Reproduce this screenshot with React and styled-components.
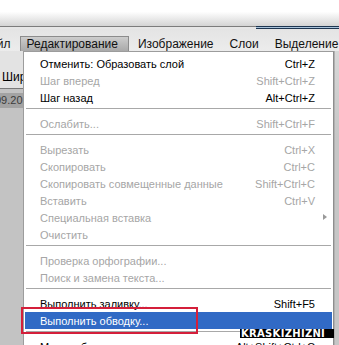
import styled, { createGlobalStyle } from 'styled-components';

const GlobalStyle = createGlobalStyle`
    html, body {
        margin: 0;
        padding: 0;
        overflow: hidden;
        background: #c4c4c4;
    }
    * {
        box-sizing: border-box;
    }
`;

const menuTitles = ['Файл', 'Редактирование', 'Изображение', 'Слои', 'Выделение'];

const items = [
    { label: 'Отменить: Образовать слой', keys: 'Ctrl+Z' },
    { label: 'Шаг вперед', keys: 'Shift+Ctrl+Z', off: true },
    { label: 'Шаг назад', keys: 'Alt+Ctrl+Z' },
    { sep: true },
    { label: 'Ослабить...', keys: 'Shift+Ctrl+F', off: true },
    { sep: true },
    { label: 'Вырезать', keys: 'Ctrl+X', off: true },
    { label: 'Скопировать', keys: 'Ctrl+C', off: true },
    { label: 'Скопировать совмещенные данные', keys: 'Shift+Ctrl+C', off: true },
    { label: 'Вставить', keys: 'Ctrl+V', off: true },
    { label: 'Специальная вставка', sub: true, off: true },
    { label: 'Очистить', off: true },
    { sep: true },
    { label: 'Проверка орфографии...', off: true },
    { label: 'Поиск и замена текста...', off: true },
    { sep: true },
    { label: 'Выполнить заливку...', keys: 'Shift+F5' },
    { label: 'Выполнить обводку...', active: true },
    { sep: true },
    { label: 'Масштаб с учетом содержимого', keys: 'Alt+Shift+Ctrl+C' },
];

function App() {
    return (
        <Screen>
            <GlobalStyle />
            <TopStrip />
            <RuleRow>
                <Rule />
                <BlueBar />
            </RuleRow>
            <MenuBar>
                {menuTitles.map((t, i) => (
                    <MenuTitle key={t} open={i === 1} first={i === 0}>
                        {t}
                    </MenuTitle>
                ))}
            </MenuBar>
            <Body>
                <LeftPanel>
                    <OptionsBar>Ширина</OptionsBar>
                    <DocTab>09.2010</DocTab>
                </LeftPanel>
                <Dropdown>
                    {items.map((it, i) =>
                        it.sep ? (
                            <Separator key={i} />
                        ) : (
                            <Item key={i} off={it.off} active={it.active}>
                                <span>{it.label}</span>
                                <Keys>{it.keys}</Keys>
                                {it.sub && <Arrow />}
                            </Item>
                        )
                    )}
                </Dropdown>
                <RightStrip />
            </Body>
            <Marker />
            <Watermark>KRASKIZHIZNI</Watermark>
        </Screen>
    );
}

export default App;

const Screen = styled.div`
    position: relative;
    width: 339px;
    height: 345px;
    overflow: hidden;
    display: flex;
    flex-direction: column;
    font-family: 'Liberation Sans', Arial, sans-serif;
    background: #c4c4c4;
`;

const TopStrip = styled.div`
    height: 26px;
    flex-shrink: 0;
    background: linear-gradient(#ffffff 0%, #ffffff 45%, #d4d4d4 100%);
`;

const RuleRow = styled.div`
    height: 3px;
    flex-shrink: 0;
    display: flex;
    background: #e6e6e6;
`;

const Rule = styled.div`
    flex: 1;
    border-top: 1px solid #7c7c7c;
`;

const BlueBar = styled.div`
    width: 83px;
    background: #a9c3db;
    border-top: 1px solid #1d3550;
    border-bottom: 1px solid #1d3550;
`;

const MenuBar = styled.div`
    height: 22px;
    flex-shrink: 0;
    display: flex;
    align-items: center;
    gap: 2px;
    padding-top: 7px;
    background: linear-gradient(#e4e4e4, #ececec);
    white-space: nowrap;
`;

const MenuTitle = styled.div`
    height: 15px;
    line-height: 14px;
    padding: ${p => (p.open ? '0 10px 0 6px' : '0 6px')};
    font-size: 12px;
    color: #111;
    margin-left: ${p => (p.first ? '-26px' : '0')};
    border: 1px solid ${p => (p.open ? '#8c8c8c' : 'transparent')};
    border-bottom: none;
    background: ${p => (p.open ? 'linear-gradient(#cdcdcd, #a9a9a9)' : 'transparent')};
`;

const Body = styled.div`
    flex: 1;
    display: flex;
    min-height: 0;
`;

const LeftPanel = styled.div`
    width: 23px;
    flex-shrink: 0;
    overflow: hidden;
    display: flex;
    flex-direction: column;
    background: #c3c3c3;
`;

const OptionsBar = styled.div`
    height: 38px;
    padding: 19px 0 0 2px;
    font-size: 12px;
    color: #000;
    white-space: nowrap;
    background: #e3e3e3;
    border-bottom: 1px solid #7a7a7a;
`;

const DocTab = styled.div`
    margin-top: 4px;
    height: 15px;
    line-height: 15px;
    margin-left: -5px;
    font-size: 11px;
    color: #3c3c3c;
    white-space: nowrap;
    background: #a3a3a3;
`;

const Dropdown = styled.div`
    width: 311px;
    flex-shrink: 0;
    padding-top: 3px;
    background: #ffffff;
    border-left: 1px solid #9c9c9c;
    border-right: 1px solid #8e8e8e;
    border-top: 1px solid #9c9c9c;
    font-size: 11px;
`;

const Item = styled.div`
    position: relative;
    height: 17px;
    display: flex;
    align-items: center;
    justify-content: space-between;
    margin: 0 1px 0 1px;
    padding: 0 17px 0 15px;
    white-space: nowrap;
    color: ${p => (p.active ? '#ffffff' : p.off ? '#a6a6a6' : '#000000')};
    background: ${p => (p.active ? '#316ac5' : 'transparent')};
`;

const Keys = styled.span`
    text-align: right;
`;

const Arrow = styled.i`
    position: absolute;
    right: 5px;
    top: 5px;
    width: 0;
    height: 0;
    border-top: 3px solid transparent;
    border-bottom: 3px solid transparent;
    border-left: 4px solid #9a9a9a;
`;

const Separator = styled.div`
    height: 9px;
    margin: 0 2px 0 2px;
    padding-top: 2px;
    &::before {
        content: '';
        display: block;
        border-top: 1px solid #a8a8a8;
    }
`;

const RightStrip = styled.div`
    flex: 1;
    background: linear-gradient(#d8d8d8, #c6c6c6 30%);
    border-left: 1px solid #b0b0b0;
`;

const Marker = styled.div`
    position: absolute;
    left: 21px;
    top: 307px;
    width: 177px;
    height: 27px;
    border: 2px solid #d41f3a;
`;

const Watermark = styled.div`
    position: absolute;
    left: 240px;
    top: 329px;
    width: 94px;
    font-family: 'DejaVu Sans', sans-serif;
    font-weight: 900;
    font-size: 10px;
    line-height: 9px;
    letter-spacing: 0.3px;
    color: #ffffff;
    background: #000;
    padding: 0 0 0 1px;
    white-space: nowrap;
    overflow: hidden;
    text-shadow: 1px 0 0 #000, -1px 0 0 #000, 0 1px 0 #000, 0 -1px 0 #000;
`;
